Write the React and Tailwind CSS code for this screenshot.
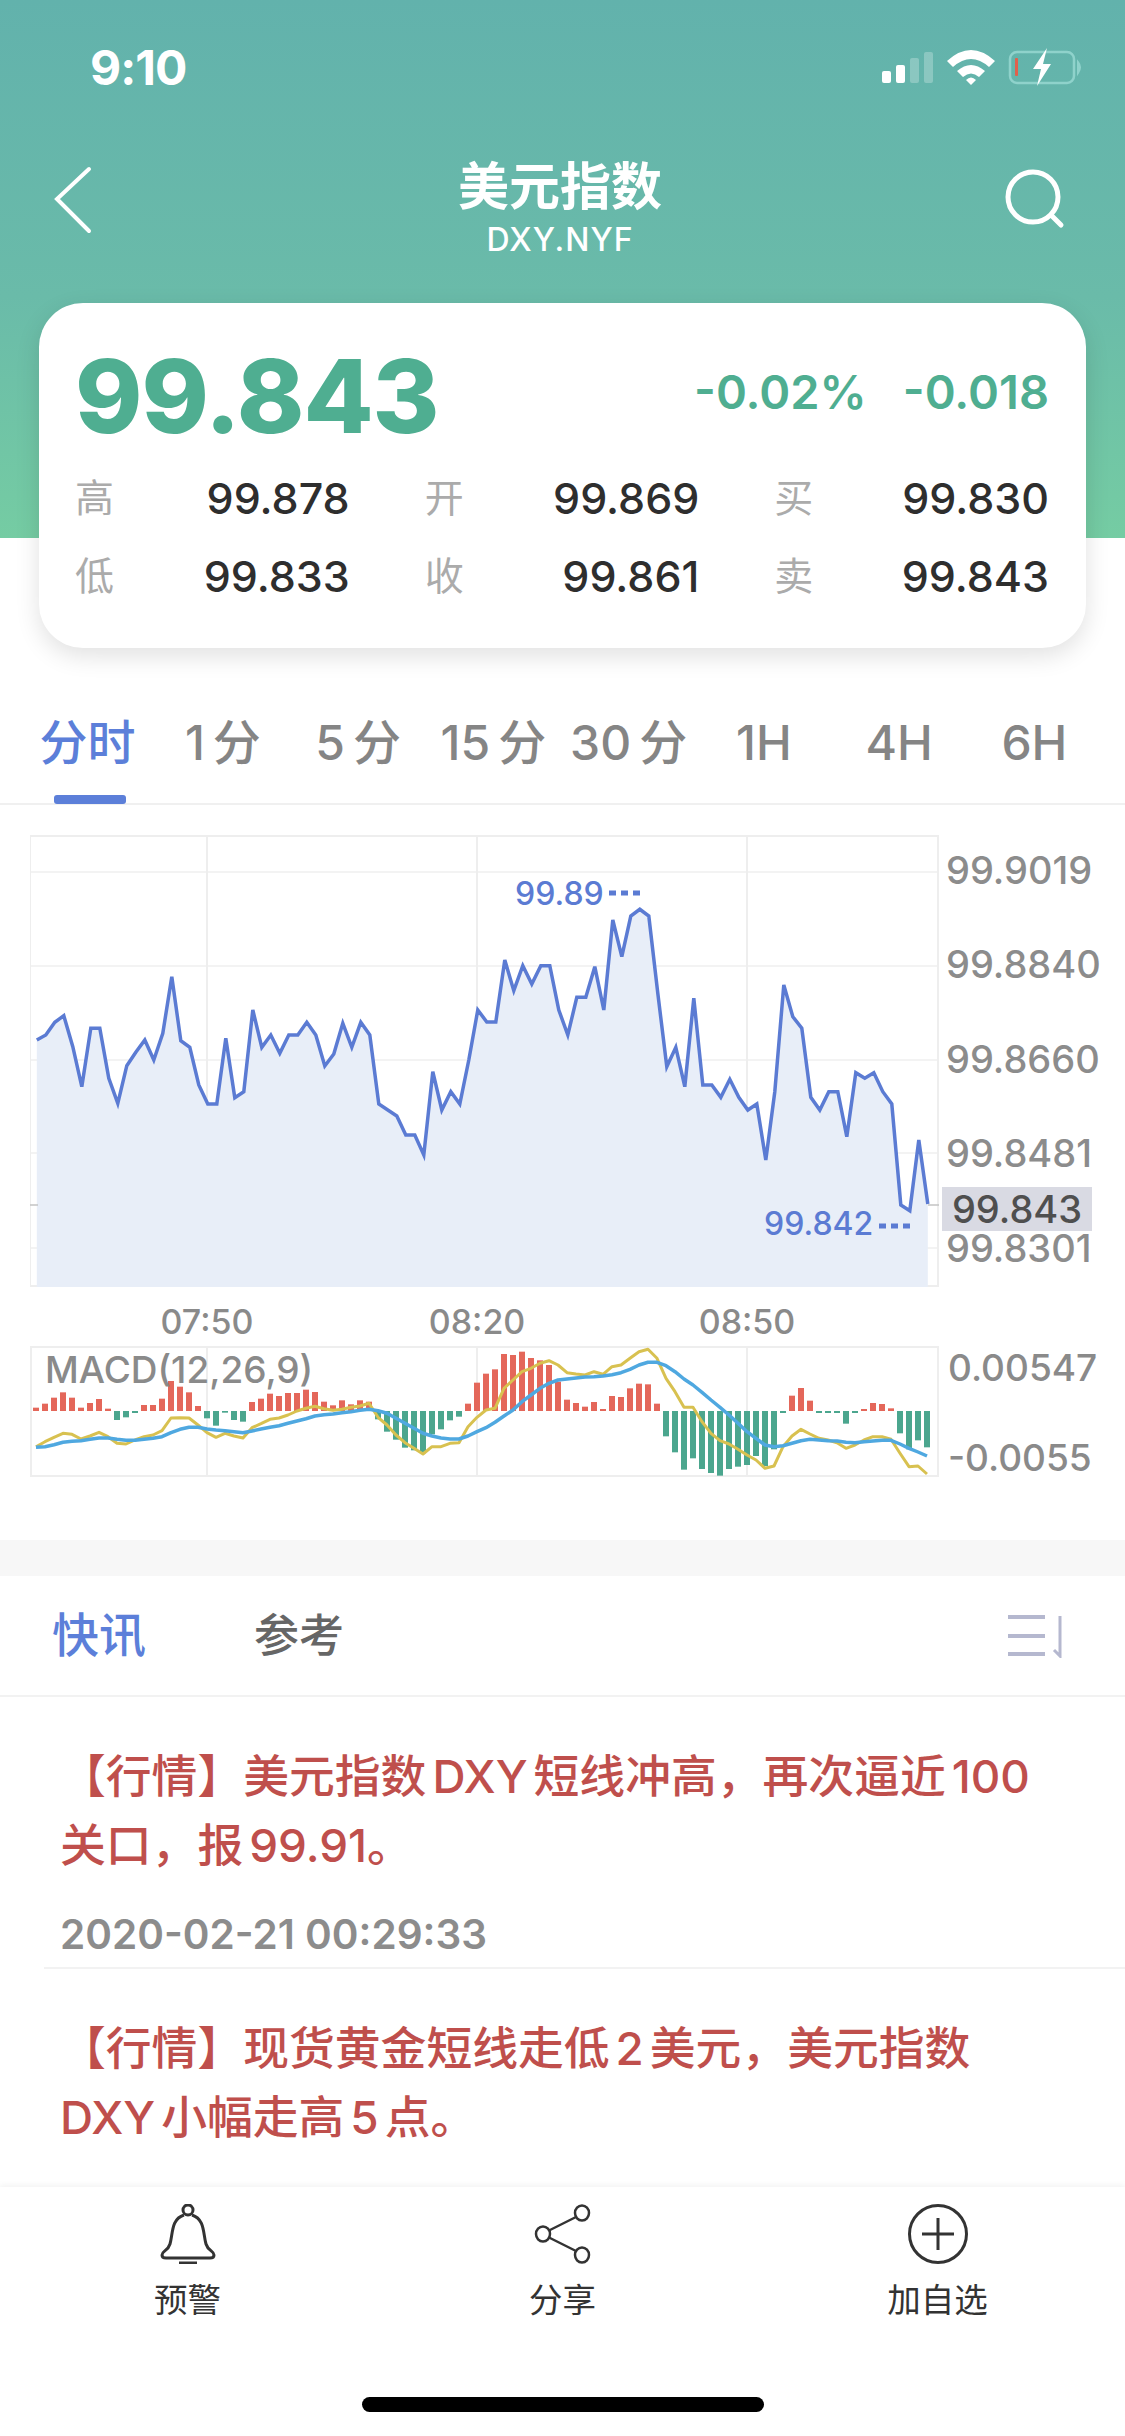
import React from 'react';

const FONT = "font-[Inter,'Noto_Sans_CJK_SC',sans-serif]";

// chart data, y values as read off the reference
const PRICE = [
  660, 645, 607, 587, 680, 800, 625, 625, 775, 850, 737, 697, 660, 720, 640, 470, 662, 682, 795, 852,
  852, 655, 833, 815, 570, 682, 645, 700, 645, 645, 607, 645, 738, 702, 610, 682, 607, 645, 852, 870,
  888, 945, 945, 1005, 755, 870, 815, 852, 720, 570, 606, 606, 420, 512, 437, 492, 437, 437, 570, 645,
  532, 532, 440, 570, 300, 410, 288, 268, 288, 520, 740, 682, 800, 535, 795, 795, 832, 778, 832, 870,
  852, 1020, 815, 495, 590, 625, 832, 870, 815, 815, 950, 758, 775, 758, 815, 852, 1155, 1172, 960, 1152,
];

const BARS = [
  10, 22, 40, 56, 40, 10, 24, 36, 7, -27, -19, -6, 18, 18, 37, 90, 73, 56, 15, -22,
  -44, -5, -27, -32, 27, 37, 52, 45, 54, 54, 64, 57, 28, 17, 32, 20, 32, 28, -25, -62,
  -86, -110, -118, -127, -70, -55, -28, -17, 22, 85, 112, 125, 171, 168, 178, 159, 152, 138, 88, 34,
  24, 13, 27, 6, 45, 42, 68, 82, 80, 22, -76, -124, -176, -142, -174, -186, -194, -174, -167, -162,
  -135, -165, -115, -6, 46, 69, 31, -6, -6, -6, -38, -6, 6, 24, 21, 8, -67, -115, -88, -109,
];

const DIF = [
  350, 335, 322, 310, 313, 327, 318, 307, 320, 340, 342, 330, 320, 315, 302, 264, 263, 264, 285, 308,
  322, 310, 318, 324, 293, 281, 268, 264, 255, 243, 235, 229, 236, 241, 238, 232, 228, 220, 262, 285,
  315, 338, 355, 372, 350, 350, 340, 338, 290, 262, 240, 235, 175, 150, 125, 115, 100, 92, 105, 128,
  132, 135, 125, 133, 110, 105, 85, 65, 58, 85, 145, 185, 232, 232, 275, 310, 332, 342, 358, 375,
  390, 415, 408, 350, 318, 298, 312, 325, 330, 338, 355, 345, 330, 320, 320, 328, 370, 410, 408, 432,
];

const DEA = [
  352, 350, 344, 337, 334, 332, 328, 324, 324, 328, 331, 331, 328, 325, 320, 308, 298, 292, 292, 297,
  300, 302, 305, 308, 303, 297, 292, 287, 280, 273, 266, 258, 254, 252, 248, 245, 241, 238, 242, 250,
  265, 280, 295, 310, 318, 324, 327, 327, 318, 305, 293, 277, 258, 240, 215, 195, 175, 160, 150, 147,
  144, 141, 140, 138, 134, 128, 118, 105, 97, 97, 107, 125, 147, 165, 187, 210, 232, 255, 280, 305,
  325, 345, 350, 347, 340, 332, 328, 330, 332, 333, 337, 338, 335, 333, 331, 331, 342, 355, 366, 378,
];

const toPriceY = (v) => 820 + v / 3;
const toMacdY = (v) => 1330 + v / 3;
const pricePoints = PRICE.map((v, i) => `${(36.8 + i * 9).toFixed(1)},${toPriceY(v).toFixed(1)}`).join(' ');
const difPoints = DIF.map((v, i) => `${36 + i * 9},${toMacdY(v).toFixed(1)}`).join(' ');
const deaPoints = DEA.map((v, i) => `${36 + i * 9},${toMacdY(v).toFixed(1)}`).join(' ');

const TABS = [
  { num: '', unit: '分时' },
  { num: '1', unit: '分' },
  { num: '5', unit: '分' },
  { num: '15', unit: '分' },
  { num: '30', unit: '分' },
  { num: '', unit: '1H' },
  { num: '', unit: '4H' },
  { num: '', unit: '6H' },
];
const AXIS = ['99.9019', '99.8840', '99.8660', '99.8481', '99.8301'];
const QUOTES = [
  ['高', '99.878', '开', '99.869', '买', '99.830'],
  ['低', '99.833', '收', '99.861', '卖', '99.843'],
];

function StatusBar() {
  return (
    <div className="h-[136px] pl-[90px] pr-[43px] flex items-center justify-between text-white">
      <span className="text-[48px] font-bold leading-none tracking-[-1px]">9:10</span>
      <svg width="200" height="40" viewBox="882 50 200 40">
        <rect x="882" y="73" width="9" height="12" rx="2" fill="#fff" />
        <rect x="896" y="67" width="9" height="18" rx="2" fill="#fff" />
        <rect x="910" y="60" width="9" height="25" rx="2" fill="#fff" fillOpacity="0.25" />
        <rect x="924" y="54" width="9" height="31" rx="2" fill="#fff" fillOpacity="0.25" />
        <path d="M947 63 Q971 41 995 63 L989 69 Q971 53 953 69 Z" fill="#fff" />
        <path d="M957 73 Q971 61 985 73 L979 79 Q971 72 963 79 Z" fill="#fff" />
        <path d="M966 82 Q971 77 976 82 L971 87 Z" fill="#fff" />
        <rect x="1010" y="54" width="64" height="31" rx="7" fill="none" stroke="#8fd2cb" strokeWidth="2.5" />
        <path d="M1078 64 Q1082 69 1078 75 Z" fill="#8fd2cb" stroke="#8fd2cb" strokeWidth="2" />
        <rect x="1015" y="60" width="3" height="18" rx="1" fill="#e0604c" />
        <path d="M1047 50 L1033 71 L1041 71 L1037 88 L1051 66 L1043 66 Z" fill="#fff" />
      </svg>
    </div>
  );
}

function NavBar() {
  return (
    <div className="h-[167px] pl-[52px] pr-[57px] flex justify-between text-white">
      <div className="w-[64px]">
        <svg width="42" height="70" viewBox="0 0 42 70" className="mt-[29px]" fill="none" stroke="#fff" strokeWidth="4" strokeLinecap="round">
          <path d="M37 4 L5 34 L37 66" />
        </svg>
      </div>
      <div className="flex flex-col items-center">
        <span className="mt-[25px] text-[51px] leading-[52px] font-semibold">美元指数</span>
        <span className="mt-[9px] text-[32px] leading-[36px] font-medium tracking-[1px]">DXY.NYF</span>
      </div>
      <svg width="64" height="64" viewBox="0 0 64 64" className="mt-[32px]" fill="none" stroke="#fff" strokeWidth="5" strokeLinecap="round">
        <circle cx="29" cy="29" r="25" />
        <path d="M47 47 L57 57" />
      </svg>
    </div>
  );
}

function QuoteCard() {
  return (
    <div className="mx-[39px] h-[345px] pl-[36px] pr-[37px] rounded-[44px] bg-white shadow-[0_8px_24px_rgba(0,0,0,0.12)]">
      <div className="h-[163px] flex items-center justify-between">
        <span className="mt-[23px] text-[102px] leading-none font-extrabold text-[#4fae91] tracking-[-1px]">99.843</span>
        <div className="flex gap-[36px] mt-[14px] text-[47px] leading-none font-semibold text-[#4fae91]">
          <span>-0.02%</span>
          <span>-0.018</span>
        </div>
      </div>
      <div className="flex flex-col gap-[18px]">
        {QUOTES.map((row) => (
          <div key={row[0]} className="h-[60px] grid grid-cols-3 gap-x-[75px] items-center">
            {[0, 2, 4].map((i) => (
              <div key={i} className="flex justify-between items-center">
                <span className="text-[39px] text-[#ababab]">{row[i]}</span>
                <span className="text-[43px] font-medium text-[#2e2e2e]">{row[i + 1]}</span>
              </div>
            ))}
          </div>
        ))}
      </div>
    </div>
  );
}

function Tabs() {
  return (
    <div className="h-[157px] pl-[20px] pr-[23px] pt-[65px] grid grid-cols-8 border-b-2 border-[#f0f0f0]">
      {TABS.map((tab, i) => (
        <div key={tab.unit + tab.num} className="relative flex justify-center h-[60px]">
          <span className={`text-[48px] leading-[60px] font-medium ${i === 0 ? 'text-[#5c7fd9]' : 'text-[#858585]'}`}>
            {tab.num && <span className="mr-[8px]">{tab.num}</span>}
            {tab.unit}
          </span>
          {i === 0 && <div className="absolute left-[34px] top-[82px] w-[72px] h-[9px] rounded-[3px] bg-[#5c7fd9]" />}
        </div>
      ))}
    </div>
  );
}

function PriceChart() {
  return (
    <div className="pt-[30px] pl-[30px] flex">
      <div className="relative w-[909px] h-[452px]">
        <svg width="909" height="452" viewBox="30 835 909 452" className="block">
          <g stroke="#eeeeee" strokeWidth="2" fill="none">
            <rect x="30" y="836" width="908" height="450" />
            <path d="M207 836 V1286 M477 836 V1286 M747 836 V1286" />
            <path d="M30 872 H938 M30 966 H938 M30 1060 H938 M30 1153 H938 M30 1248 H938" strokeOpacity="0.7" />
          </g>
          <polygon points={`36.8,1287 ${pricePoints} 927.8,1287`} fill="#e8eef8" />
          <polyline points={pricePoints} fill="none" stroke="#5b7bd3" strokeWidth="3.5" strokeLinejoin="miter" />
          <path d="M30 1205 H38 M928 1205 H939" stroke="#c4c4c4" strokeWidth="1.5" />
          <path d="M609 893 H640" stroke="#5b7bd3" strokeWidth="5" strokeDasharray="7 5" />
          <path d="M879 1226 H910" stroke="#5b7bd3" strokeWidth="5" strokeDasharray="7 5" />
        </svg>
        <span className="absolute left-[485px] top-[41px] text-[32px] leading-[36px] font-medium text-[#5b7bd3]">99.89</span>
        <span className="absolute left-[734px] top-[371px] text-[32px] leading-[36px] font-medium text-[#5b7bd3]">99.842</span>
      </div>
      <div className="relative pl-[7px] pt-[15px] flex flex-col gap-[54.4px]">
        {AXIS.map((label) => (
          <span key={label} className="h-[40px] text-[38px] leading-[40px] font-medium text-[#8c8c8c]">{label}</span>
        ))}
        <span className="absolute left-[3px] top-[352px] w-[150px] h-[44px] bg-[#d9dae3] text-center text-[38px] leading-[44px] font-medium text-[#4f4f4f]">99.843</span>
      </div>
    </div>
  );
}

function TimeAxis() {
  return (
    <div className="ml-[72px] w-[810px] h-[59px] pt-[10px] grid grid-cols-3 items-center text-center text-[34px] leading-[40px] font-medium text-[#8a8a8a]">
      <span>07:50</span>
      <span>08:20</span>
      <span>08:50</span>
    </div>
  );
}

function MacdChart() {
  return (
    <div className="pl-[30px] flex">
      <div className="relative w-[909px] h-[130px]">
        <svg width="909" height="130" viewBox="30 1346 909 130" className="block overflow-visible">
          <g stroke="#eeeeee" strokeWidth="2" fill="none">
            <rect x="31" y="1347" width="907" height="129" />
            <path d="M207 1347 V1476 M477 1347 V1476 M747 1347 V1476" />
          </g>
          {BARS.map((v, i) => {
            const h = Math.abs(v) / 3;
            return (
              <rect
                key={i}
                x={33 + i * 9}
                y={v > 0 ? 1411 - h : 1411}
                width="6"
                height={h}
                fill={v > 0 ? '#e4675a' : '#4ba68e'}
              />
            );
          })}
          <polyline points={difPoints} fill="none" stroke="#d8c150" strokeWidth="3" strokeLinejoin="round" />
          <polyline points={deaPoints} fill="none" stroke="#4fa8e0" strokeWidth="3.5" strokeLinejoin="round" />
        </svg>
        <span className="absolute left-[15px] top-[4px] text-[37px] leading-[40px] font-medium text-[#8a8a8a]">MACD(12,26,9)</span>
      </div>
      <div className="pl-[9px] pt-[2px] flex flex-col gap-[50px] text-[37px] leading-[40px] font-medium text-[#8a8a8a]">
        <span>0.00547</span>
        <span>-0.0055</span>
      </div>
    </div>
  );
}

function NewsTabs() {
  return (
    <div className="h-[121px] pl-[52px] pr-[58px] flex items-center justify-between border-b-2 border-[#f2f2f2]">
      <div className="flex items-center gap-[108px]">
        <span className="text-[47px] font-medium text-[#5c7fd9]">快讯</span>
        <span className="text-[45px] font-medium text-[#666666]">参考</span>
      </div>
      <svg width="60" height="44" viewBox="0 0 60 44" fill="none" stroke="#b5b8cf">
        <path d="M1 3 H38 M1 22 H38 M1 40 H38" strokeWidth="4" />
        <path d="M53 2 V42 L47 36" strokeWidth="3" />
      </svg>
    </div>
  );
}

function BellIcon() {
  return (
    <svg width="60" height="60" viewBox="0 0 60 60" fill="none" stroke="#333" strokeWidth="3">
      <circle cx="30" cy="6" r="5" />
      <path d="M26 11 C13 15 15 30 12 40 C10 47 4 47 4 51 C4 53 6 54 8 54 H52 C54 54 56 53 56 51 C56 47 50 47 48 40 C45 30 47 15 34 11" />
      <path d="M21 59 H39" strokeWidth="3" />
    </svg>
  );
}

function ShareIcon() {
  return (
    <svg width="60" height="60" viewBox="0 0 60 60" fill="none" stroke="#333" strokeWidth="2.5">
      <ellipse cx="49" cy="9" rx="7" ry="7.5" />
      <ellipse cx="10" cy="30" rx="7" ry="7.5" />
      <ellipse cx="49" cy="51" rx="7" ry="7.5" />
      <path d="M43 13 L16 26.5 M16 33.5 L43 47" />
    </svg>
  );
}

function PlusIcon() {
  return (
    <svg width="60" height="60" viewBox="0 0 60 60" fill="none" stroke="#333" strokeWidth="3">
      <circle cx="30" cy="30" r="28.5" />
      <path d="M14 30 H46 M30 14 V46" />
    </svg>
  );
}

function BottomBar() {
  const items = [
    { label: '预警', icon: <BellIcon /> },
    { label: '分享', icon: <ShareIcon /> },
    { label: '加自选', icon: <PlusIcon /> },
  ];
  return (
    <div className="relative h-[249px] shrink-0 bg-white shadow-[0_-2px_6px_rgba(0,0,0,0.05)]">
      <div className="pt-[17px] grid grid-cols-3">
        {items.map((item) => (
          <div key={item.label} className="flex flex-col items-center">
            {item.icon}
            <span className="mt-[16px] text-[33.5px] leading-[40px] text-[#333333]">{item.label}</span>
          </div>
        ))}
      </div>
      <div className="absolute left-[362px] top-[210px] w-[402px] h-[15px] rounded-full bg-black" />
    </div>
  );
}

export default function App() {
  return (
    <div className={`${FONT} w-[1125px] h-[2436px] flex flex-col overflow-hidden bg-white`}>
      <div className="shrink-0 bg-[linear-gradient(to_bottom,#62b2ac,#6abba9_55%,#75cca3)] bg-no-repeat bg-[length:100%_538px]">
        <StatusBar />
        <NavBar />
        <QuoteCard />
      </div>
      <Tabs />
      <PriceChart />
      <TimeAxis />
      <MacdChart />
      <div className="h-[36px] mt-[62px] shrink-0 bg-[#f7f7f7]" />
      <NewsTabs />
      <div className="flex-1 overflow-hidden">
        <div className="ml-[44px] pl-[16px] border-b-2 border-[#f2f2f2]">
          <p className="pt-[45px] w-[1000px] text-[45.8px] leading-[69px] font-medium text-[#bf4f4c]">
            【行情】美元指数<span className="mx-[6px]">DXY</span>短线冲高，再次逼近<span className="ml-[6px]">100</span> 关口，报<span className="ml-[6px]">99.91</span>。
          </p>
          <p className="pt-[32px] pb-[9px] text-[40.5px] leading-[46px] font-semibold text-[#8c8c8c]">2020-02-21 00:29:33</p>
        </div>
        <div className="ml-[44px] pl-[16px]">
          <p className="pt-[45px] w-[1000px] text-[45.8px] leading-[69px] font-medium text-[#bf4f4c]">
            【行情】现货黄金短线走低<span className="mx-[6px]">2</span>美元，美元指数 DXY<span className="ml-[6px]">小幅走高</span><span className="mx-[6px]">5</span>点。
          </p>
        </div>
      </div>
      <BottomBar />
    </div>
  );
}
